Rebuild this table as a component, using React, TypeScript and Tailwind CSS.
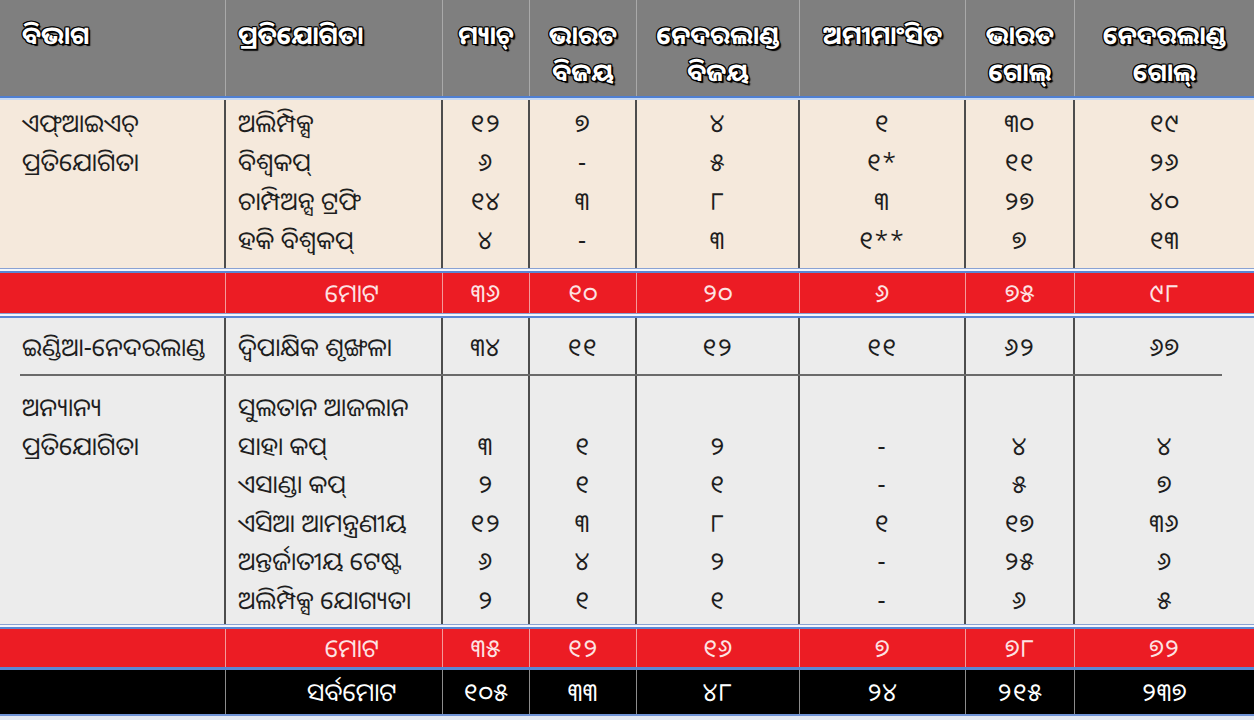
import React from "react";

const COLS = "grid grid-cols-[226px_217px_87px_107px_163px_166px_109px_1fr]";
const FONT = "font-['Noto_Sans_Oriya','Lohit_Odia','Noto_Sans','DejaVu_Sans',sans-serif]";
const OUTLINE =
  "[text-shadow:1px_1px_0_#000,-1px_-1px_0_#000,1px_-1px_0_#000,-1px_1px_0_#000,0_1px_0_#000,0_-1px_0_#000,1px_0_0_#000,-1px_0_0_#000,2px_2px_1px_#000]";

const header = [
  { lines: ["ବିଭାଗ"], align: "left" },
  { lines: ["ପ୍ରତିଯୋଗିତା"], align: "left" },
  { lines: ["ମ୍ୟାଚ୍"], align: "center" },
  { lines: ["ଭାରତ", "ବିଜୟ"], align: "center" },
  { lines: ["ନେଦରଲାଣ୍ଡ", "ବିଜୟ"], align: "center" },
  { lines: ["ଅମୀମାଂସିତ"], align: "center" },
  { lines: ["ଭାରତ", "ଗୋଲ୍"], align: "center" },
  { lines: ["ନେଦରଲାଣ୍ଡ", "ଗୋଲ୍"], align: "center" },
];

type Section = { label: string[]; rows: string[][] };

const fih: Section = {
  label: ["ଏଫ୍ଆଇଏଚ୍", "ପ୍ରତିଯୋଗିତା"],
  rows: [
    ["ଅଲିମ୍ପିକ୍ସ", "୧୨", "୭", "୪", "୧", "୩୦", "୧୯"],
    ["ବିଶ୍ୱକପ୍", "୬", "-", "୫", "୧*", "୧୧", "୨୬"],
    ["ଚାମ୍ପିଅନ୍ସ ଟ୍ରଫି", "୧୪", "୩", "୮", "୩", "୨୭", "୪୦"],
    ["ହକି ବିଶ୍ୱକପ୍", "୪", "-", "୩", "୧**", "୭", "୧୩"],
  ],
};

const bilateral: Section = {
  label: ["ଇଣ୍ଡିଆ-ନେଦରଲାଣ୍ଡ"],
  rows: [["ଦ୍ୱିପାକ୍ଷିକ ଶୃଙ୍ଖଳା", "୩୪", "୧୧", "୧୨", "୧୧", "୬୨", "୬୭"]],
};

const others: Section = {
  label: ["ଅନ୍ୟାନ୍ୟ", "ପ୍ରତିଯୋଗିତା"],
  rows: [
    ["ସୁଲତାନ ଆଜଲାନ", "", "", "", "", "", ""],
    ["ସାହା କପ୍", "୩", "୧", "୨", "-", "୪", "୪"],
    ["ଏସାଣ୍ଡା କପ୍", "୨", "୧", "୧", "-", "୫", "୭"],
    ["ଏସିଆ ଆମନ୍ତ୍ରଣୀୟ", "୧୨", "୩", "୮", "୧", "୧୭", "୩୬"],
    ["ଅନ୍ତର୍ଜାତୀୟ ଟେଷ୍ଟ", "୬", "୪", "୨", "-", "୨୫", "୬"],
    ["ଅଲିମ୍ପିକ୍ସ ଯୋଗ୍ୟତା", "୨", "୧", "୧", "-", "୬", "୫"],
  ],
};

function Band() {
  return (
    <div className="h-[5px] border-t border-b-2 border-t-[#8aa2d4] border-b-[#5b87d4] bg-[#f4f7fc]" />
  );
}

function SectionBlock({
  s,
  lineH,
  pt,
  pb,
}: {
  s: Section;
  lineH: string;
  pt: string;
  pb: string;
}) {
  return (
    <div className={`${COLS} ${lineH}`}>
      <div className={`border-r-2 border-[#4d4d4d] pl-[22px] ${pt} ${pb}`}>
        {s.label.map((l, i) => (
          <div key={i} className="whitespace-nowrap">
            {l}
          </div>
        ))}
      </div>
      {Array.from({ length: 7 }).map((_, c) => (
        <div
          key={c}
          className={`${c < 6 ? "border-r-2 border-[#4d4d4d]" : ""} ${
            c === 0 ? "pl-[12px] text-left" : "text-center tracking-[1px]"
          } ${pt} ${pb}`}
        >
          {s.rows.map((r, i) => (
            <div key={i} className="whitespace-nowrap">
              {r[c] === "" ? "\u00a0" : r[c]}
            </div>
          ))}
        </div>
      ))}
    </div>
  );
}

function TotalRow({
  label,
  values,
  bg,
  line,
  text,
  h,
}: {
  label: string;
  values: string[];
  bg: string;
  line: string;
  text: string;
  h: string;
}) {
  return (
    <div className={`${COLS} ${bg} ${text} ${h} items-stretch`}>
      <div className={`border-r ${line}`} />
      <div className={`border-r ${line} flex items-center justify-center pl-[36px]`}>{label}</div>
      {values.map((v, i) => (
        <div
          key={i}
          className={`${i < 5 ? `border-r ${line}` : ""} flex items-center justify-center tracking-[1px]`}
        >
          {v}
        </div>
      ))}
    </div>
  );
}

export default function App() {
  return (
    <div className={`w-[1254px] h-[720px] overflow-hidden bg-[#eaedf3] ${FONT} text-[25px] text-[#1e1e1e]`}>
      {/* Header */}
      <div className={`${COLS} h-[96px] bg-[#7f7f7f] text-white font-bold ${OUTLINE} leading-[37px]`}>
        {header.map((h, i) => (
          <div
            key={i}
            className={`${i < 7 ? "border-r border-[#a9a9a9]" : ""} pt-[16px] ${
              h.align === "left" ? (i === 0 ? "pl-[22px]" : "pl-[12px]") : "text-center"
            }`}
          >
            {h.lines.map((l, j) => (
              <div key={j} className="whitespace-nowrap">
                {l}
              </div>
            ))}
          </div>
        ))}
      </div>
      <div className="h-[4px] border-t-2 border-[#4f7fd2] bg-[#c7d9f3]" />

      {/* FIH section */}
      <div className="bg-[#f5e9dc]">
        <SectionBlock s={fih} lineH="leading-[39px]" pt="pt-[3px]" pb="pb-[9px]" />
      </div>
      <Band />
      <TotalRow
        label="ମୋଟ"
        values={["୩୬", "୧୦", "୨୦", "୬", "୭୫", "୯୮"]}
        bg="bg-[#ec1c24]"
        line="border-[#f49a9a]"
        text="text-[#fde3e3]"
        h="h-[40px]"
      />
      <Band />

      {/* Gray section */}
      <div className="bg-[#ececec]">
        <SectionBlock s={bilateral} lineH="leading-[56px]" pt="pt-0" pb="pb-0" />
        <div className="flex h-[2px]">
          <div className="w-[20px]" />
          <div className="w-[1202px] bg-[#6a6a6a]" />
        </div>
        <SectionBlock s={others} lineH="leading-[38.5px]" pt="pt-[11px]" pb="pb-[6px]" />
      </div>
      <Band />
      <TotalRow
        label="ମୋଟ"
        values={["୩୫", "୧୨", "୧୬", "୭", "୭୮", "୭୨"]}
        bg="bg-[#ec1c24]"
        line="border-[#f49a9a]"
        text="text-[#fde3e3]"
        h="h-[38px]"
      />
      <div className="h-[3px] bg-[#5b87d4]" />
      <TotalRow
        label="ସର୍ବମୋଟ"
        values={["୧୦୫", "୩୩", "୪୮", "୨୪", "୨୧୫", "୨୩୭"]}
        bg="bg-black"
        line="border-[#8c8c8c]"
        text="text-white"
        h="h-[44px]"
      />
      <div className="h-[6px] border-t-2 border-[#6f92d4] bg-[#e3e8f2]" />
    </div>
  );
}
